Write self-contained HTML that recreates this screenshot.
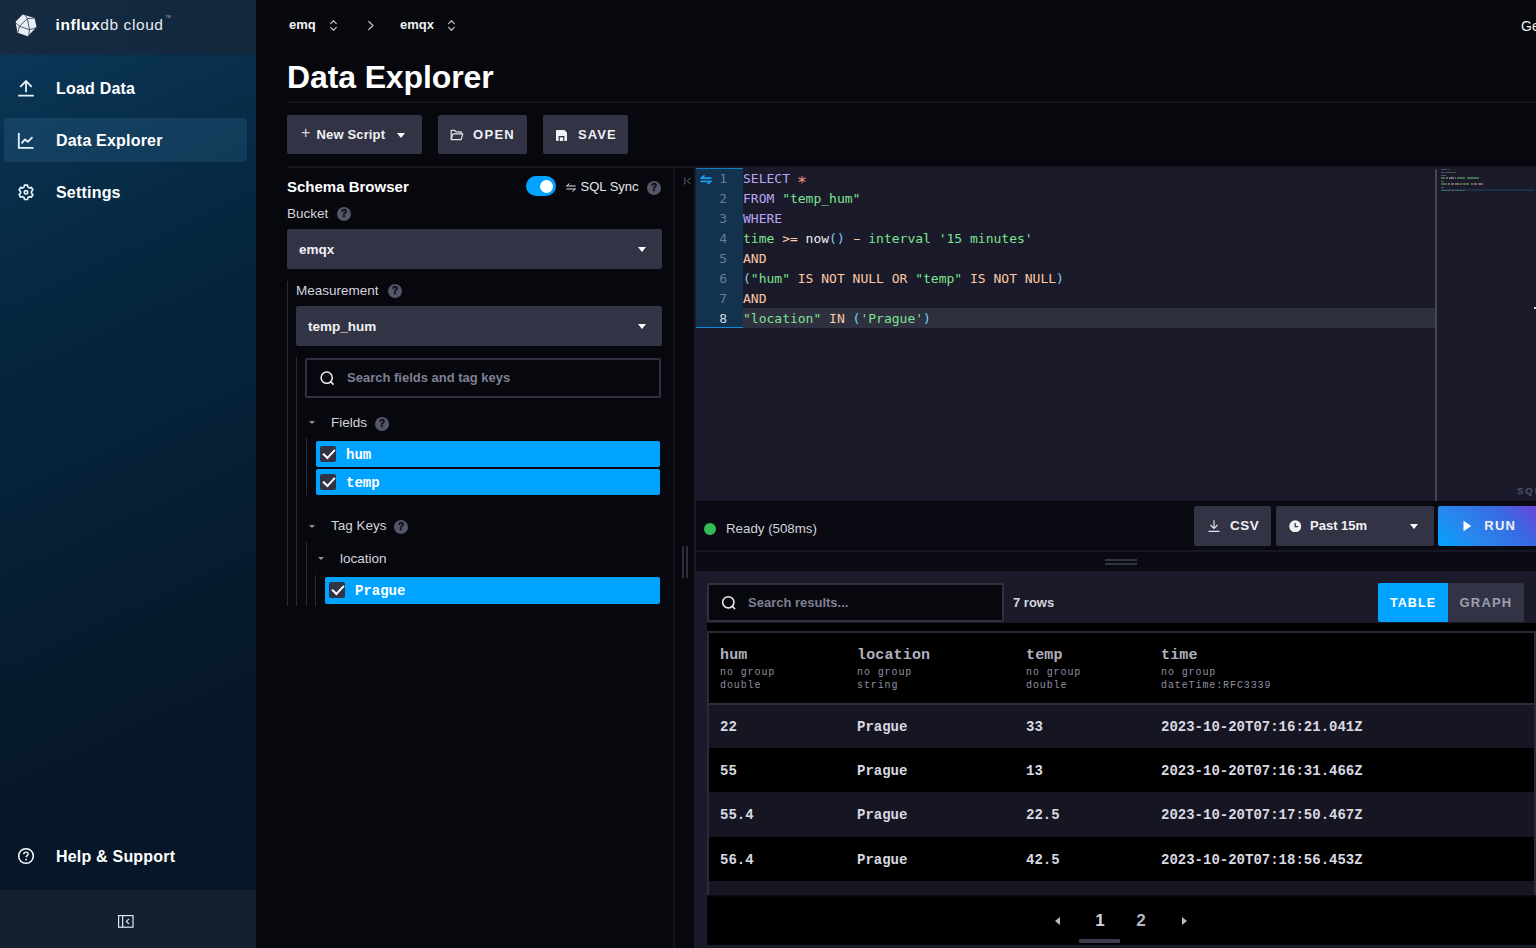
<!DOCTYPE html>
<html lang="en">
<head>
<meta charset="utf-8">
<title>Data Explorer | InfluxDB Cloud</title>
<style>
*{box-sizing:border-box;margin:0;padding:0}
html,body{width:1536px;height:948px;overflow:hidden;background:#07070e;color:#fff;font-family:"Liberation Sans",sans-serif;}
body{position:relative}
.abs{position:absolute}
svg{display:block}
/* sidebar */
#nav{position:absolute;left:0;top:0;width:255.500px;height:948px;background:linear-gradient(155deg,#0c3a5c 0%,#0b3656 6%,#082e4b 18%,#06273f 30%,#062238 47%,#061d31 58%,#07182a 75%,#071527 100%);overflow:hidden}
#nav .hdr{position:absolute;left:0;top:0;width:256px;height:54.500px;background:linear-gradient(90deg,#142b42,#12273c)}
#nav .ftr{position:absolute;left:0;top:890px;width:256px;height:58px;background:#13202f}
#nav .item{position:absolute;left:4px;width:243px;height:44px;border-radius:3px;font-weight:bold;font-size:16px;line-height:44px;color:#fff;letter-spacing:.2px}
#nav .item span{position:absolute;left:52px;top:1px;white-space:nowrap}
#nav .item svg{position:absolute;left:12px;top:12px}
#nav .item.act{background:rgba(80,150,200,.16)}
.logo-t{position:absolute;left:55.500px;top:12.800px;font-size:15.500px;line-height:20px;white-space:nowrap;letter-spacing:.58px}
/* main */
.bc{position:absolute;top:16px;font-size:13px;font-weight:bold;line-height:18px;color:#f1f1f3}
h1{position:absolute;left:287px;top:56.900px;font-size:32px;line-height:40px;font-weight:bold;letter-spacing:-.12px;white-space:nowrap}
.hline{position:absolute;height:2px;background:#15151f}
.btn{position:absolute;top:114.500px;height:39.500px;background:#333346;border-radius:2px;color:#f1f1f3;font-weight:bold;font-size:13px;line-height:39px;white-space:nowrap}
.lbl{position:absolute;font-size:13.500px;line-height:19.400px;color:#d5d5dd;white-space:nowrap}
.q{position:absolute;width:14px;height:14px;border-radius:50%;background:#55566a;color:#0d0d16;font-size:10px;font-weight:bold;line-height:14.500px;text-align:center;-webkit-text-stroke:.45px #0d0d16}
.dd{position:absolute;height:40px;background:#333346;border-radius:2px;font-size:13.500px;font-weight:bold;line-height:41.200px;color:#f1f1f3}
.dd:after{content:"";position:absolute;right:16px;top:18px;border:5px solid transparent;border-top:5px solid #fff;border-bottom:0;border-left-width:4.5px;border-right-width:4.5px}
.vl{position:absolute;width:1px;background:#292937}
.sel{position:absolute;height:26.400px;background:#00a3ff;border-radius:2px;font-family:"Liberation Mono",monospace;font-weight:bold;font-size:14px;line-height:26px;color:#fff}
.sel i{position:absolute;left:4px;top:5px;width:16px;height:16px;background:#333346;border-radius:2px}
.sel span{position:absolute;left:30px;top:1px}
.sel i:after{content:"";position:absolute;left:3px;top:3px;width:10px;height:5px;border-left:2.4px solid #fff;border-bottom:2.4px solid #fff;transform:rotate(-47deg);transform-origin:50% 50%}
.caret{position:absolute;border:3.500px solid transparent;border-top:3.800px solid #8e8fa1;border-bottom:0}
/* editor */
#ed{position:absolute;left:696px;top:168px;width:840px;height:333px;background:#1a1a2a;font-family:"DejaVu Sans Mono","Liberation Mono",monospace;font-size:13px;line-height:20px;overflow:hidden}
#ed .gut{position:absolute;left:0;top:.2px;width:47px;height:159.800px;background:#12324d;border-top:1.800px solid #107cc2;border-bottom:1.500px solid #0e8ad8}
#ed .ln{position:absolute;left:0;width:31px;text-align:right;color:#687d96;height:20px}
#ed .cl{position:absolute;left:47px;height:20px;white-space:pre;color:#f1f1f3}
.k{color:#b9a7f5}.s{color:#7ce490}.o{color:#ffc9a3}.p{color:#7ad3f5}.r{color:#ff9580}
/* table */
.mono{font-family:"Liberation Mono",monospace}
.row{position:absolute;left:709px;width:825px;height:43px;font-family:"Liberation Mono",monospace;font-weight:bold;font-size:14px;line-height:45px;color:#d9d9e1}
.row span{position:absolute;top:.8px;white-space:pre}
.th{position:absolute;top:646.700px;font-family:"Liberation Mono",monospace;color:#a4a4b4}
.th b{display:block;font-size:15px;line-height:17px;letter-spacing:.15px;color:#b0b0bd;margin-bottom:2px}
.th em{display:block;font-style:normal;font-size:10px;line-height:13.300px;letter-spacing:.9px;color:#8e8fa1}
</style>
</head>
<body>
<div id="nav">
  <div class="hdr"></div>
  <div class="ftr"></div>
  <svg class="abs" style="left:14px;top:13px" width="24" height="25" viewBox="14 13 24 25"><polygon points="22.600,14.600 34.600,18.100 36.500,27 27.800,36.300 17.500,32.700 15.600,21.700" fill="#e9edf6"/><path d="M25.300 15.400L27.400 18.600L19.400 26.250M27.400 18.600L29.500 29.700L28.700 35.400M27.400 18.600L34.400 18.200M16 22.800L19.400 26.250L29.500 29.700L36.200 27.700M19.400 26.250L17.900 32.600" stroke="#1b2d45" stroke-width=".75" fill="none"/></svg>
  <div class="logo-t"><b>influx</b><span style="color:#e6e9f0">db cloud</span><sup style="font-size:3.500px;letter-spacing:0;position:relative;top:-6px;left:2px;color:#aab4c2">TM</sup></div>
  <div class="item" style="top:66px"><svg width="20" height="20" viewBox="0 0 20 20" fill="none" stroke="#e7f2fb" stroke-width="1.800"><path d="M10 14.300V3.400M4.300 8.800L10 3.100l5.700 5.700M2.200 17.700h15.600"/></svg><span>Load Data</span></div>
  <div class="item act" style="top:118px"><svg width="20" height="20" viewBox="0 0 20 20" fill="none" stroke="#e7f2fb" stroke-width="1.800"><path d="M2.800 3.100V17.800H17.500"/><path d="M5.500 13.400L9 9.400l2.800 2.400L16.500 7.100" stroke-linejoin="round"/></svg><span>Data Explorer</span></div>
  <div class="item" style="top:170px"><svg width="20" height="20" viewBox="0 0 20 20" fill="none" stroke="#e7f2fb" stroke-width="1.800" stroke-linejoin="round"><g transform="translate(10 10.300) scale(.9) translate(-10 -10)"><path d="M8.300 2h3.400l.5 2.200 1.700 1 2.100-.7 1.700 2.900-1.600 1.500v2.200l1.600 1.500-1.700 2.900-2.100-.7-1.700 1-.5 2.200H8.300l-.5-2.200-1.700-1-2.100.7-1.700-2.900 1.600-1.500V8.900L2.300 7.400 4 4.500l2.100.7 1.700-1z"/><circle cx="10" cy="10" r="1.900"/></g></svg><span>Settings</span></div>
  <div class="item" style="top:834px"><svg width="20" height="20" viewBox="0 0 20 20" fill="none" stroke="#fff" stroke-width="1.500"><circle cx="10" cy="10" r="7.300"/><path d="M7.800 8.200c0-1.300 1-2.100 2.200-2.100s2.200.8 2.200 2c0 1.500-2.100 1.600-2.100 3.200" stroke-width="1.400"/><circle cx="10.100" cy="13.600" r=".9" fill="#fff" stroke="none"/></svg><span>Help &amp; Support</span></div>
  <svg class="abs" style="left:118px;top:915px" width="16" height="13" viewBox="0 0 16 13" fill="none" stroke="#e4e8ee" stroke-width="1.200"><rect x=".6" y=".6" width="14.400" height="11.600"/><path d="M4.600 .6v11.600M11 3.800L8.400 6.400 11 9"/></svg>
</div>
<div id="main">
  <!-- breadcrumbs -->
  <div class="bc" style="left:289px">emq</div>
  <svg class="abs" style="left:329px;top:19px" width="9" height="13" viewBox="0 0 9 13" fill="none" stroke="#b9b9c5" stroke-width="1.300" stroke-linecap="round" stroke-linejoin="round"><path d="M1.700 4.600L4.500 1.800l2.800 2.800M1.700 8.400l2.800 2.800 2.800-2.800"/></svg>
  <svg class="abs" style="left:367px;top:20px" width="8" height="11" viewBox="0 0 8 11" fill="none" stroke="#b9b9c5" stroke-width="1.300" stroke-linecap="round" stroke-linejoin="round"><path d="M1.800 1.500L6 5.500l-4.200 4"/></svg>
  <div class="bc" style="left:400px">emqx</div>
  <svg class="abs" style="left:447px;top:19px" width="9" height="13" viewBox="0 0 9 13" fill="none" stroke="#b9b9c5" stroke-width="1.300" stroke-linecap="round" stroke-linejoin="round"><path d="M1.700 4.600L4.500 1.800l2.800 2.800M1.700 8.400l2.800 2.800 2.800-2.800"/></svg>
  <div class="abs" style="left:1521px;top:17px;font-size:14px;line-height:18px;color:#f1f1f3;white-space:nowrap">Get Started</div>
  <h1>Data Explorer</h1>
  <div class="hline" style="left:287px;top:101px;width:1249px"></div>
  <!-- buttons -->
  <div class="btn" style="left:287px;width:135px"><span class="abs" style="left:14px;top:-1.500px;font-weight:normal;font-size:16px;color:#d5d5dd">+</span><span class="abs" style="left:29.500px;letter-spacing:.15px">New Script</span><i class="abs" style="left:110px;top:18px;border:5px solid transparent;border-top:5px solid #fff;border-bottom:0;border-left-width:4.500px;border-right-width:4.500px"></i></div>
  <div class="btn" style="left:438px;width:89px"><svg class="abs" style="left:12px;top:14px" width="14" height="12" viewBox="0 0 14 12" fill="none" stroke="#e4e4ea" stroke-width="1.200" stroke-linejoin="round"><path d="M1.200 10.600V1.400h3.600l1.200 1.500h5.200v2"/><path d="M1.200 10.600l1.700-5.700h9.900l-1.700 5.700z"/></svg><span class="abs" style="left:35px;letter-spacing:1.300px">OPEN</span></div>
  <div class="btn" style="left:543px;width:85px"><svg class="abs" style="left:13px;top:15px" width="11" height="11" viewBox="0 0 11 11"><path d="M0 1a1 1 0 0 1 1-1h7.500L11 2.500V10a1 1 0 0 1-1 1H1a1 1 0 0 1-1-1z" fill="#f1f1f3"/><rect x="2.600" y="6" width="5.800" height="5" fill="#333346"/><rect x="3.800" y="7.300" width="3.400" height="3.700" fill="#f1f1f3"/></svg><span class="abs" style="left:35px;letter-spacing:1.050px">SAVE</span></div>
  <div class="hline" style="left:287px;top:166px;width:1249px"></div>
  <!-- schema browser -->
  <div class="abs" style="left:287px;top:176.500px;font-size:15px;font-weight:bold;line-height:20px;white-space:nowrap">Schema Browser</div>
  <div class="abs" style="left:526px;top:176px;width:30px;height:20px;border-radius:10px;background:#00a3ff"><i class="abs" style="left:14px;top:3.500px;width:13px;height:13px;border-radius:50%;background:#fff"></i></div>
  <svg class="abs" style="left:566px;top:182.500px" width="10" height="9" viewBox="0 0 11 10" fill="none" stroke="#e4e4ea" stroke-width="1.100" stroke-linecap="round" stroke-linejoin="round"><path d="M.8 3.300h9.400M.8 3.300L3.600.7M10.200 6.700H.8M10.200 6.700L7.400 9.300"/></svg>
  <div class="abs" style="left:580.500px;top:176.500px;font-size:13px;line-height:20px;color:#e7e8eb;white-space:nowrap">SQL Sync</div>
  <div class="q" style="left:647px;top:180.500px">?</div>
  <div class="lbl" style="left:287px;top:204px">Bucket</div>
  <div class="q" style="left:337px;top:207px">?</div>
  <div class="dd" style="left:287px;top:229px;width:374.500px"><span class="abs" style="left:12px">emqx</span></div>
  <div class="vl" style="left:287px;top:281px;height:325px"></div>
  <div class="lbl" style="left:296px;top:280.500px">Measurement</div>
  <div class="q" style="left:388px;top:284px">?</div>
  <div class="dd" style="left:296px;top:306px;width:365.500px"><span class="abs" style="left:12px">temp_hum</span></div>
  <div class="vl" style="left:296px;top:357px;height:249px"></div>
  <div class="abs" style="left:305px;top:358px;width:356px;height:40px;border:2px solid #303040;border-radius:2px;background:#07070e"></div>
  <svg class="abs" style="left:319px;top:369.500px" width="16" height="16" viewBox="0 0 16 16" fill="none" stroke="#f1f1f3" stroke-width="1.500" stroke-linecap="round"><circle cx="7.700" cy="7.700" r="5.600"/><path d="M11.800 11.800l2.300 2.300"/></svg>
  <div class="abs" style="left:347px;top:368px;font-size:13px;font-weight:bold;line-height:20px;color:#7f8094;white-space:nowrap">Search fields and tag keys</div>
  <i class="caret" style="left:308.500px;top:421px"></i>
  <div class="lbl" style="left:331px;top:413px">Fields</div>
  <div class="q" style="left:375px;top:416.500px">?</div>
  <div class="vl" style="left:306px;top:438px;height:57px"></div>
  <div class="sel" style="left:316px;top:441px;width:343.500px"><i></i><span>hum</span></div>
  <div class="sel" style="left:316px;top:469px;width:343.500px"><i></i><span>temp</span></div>
  <i class="caret" style="left:308.500px;top:524.500px"></i>
  <div class="lbl" style="left:331px;top:516.400px">Tag Keys</div>
  <div class="q" style="left:394px;top:520px">?</div>
  <div class="vl" style="left:306px;top:542px;height:64px"></div>
  <i class="caret" style="left:317.500px;top:557px"></i>
  <div class="lbl" style="left:340px;top:549px">location</div>
  <div class="vl" style="left:315px;top:575px;height:31px"></div>
  <div class="sel" style="left:325px;top:577.400px;width:334.500px"><i></i><span>Prague</span></div>
  <!-- resizer -->
  <div class="abs" style="left:673px;top:168px;width:2px;height:780px;background:#14141e"></div>
  <div class="abs" style="left:682px;top:545.500px;width:1.600px;height:32px;background:#2e2e3d"></div>
  <div class="abs" style="left:686px;top:545.500px;width:1.600px;height:32px;background:#2e2e3d"></div>
  <svg class="abs" style="left:683.500px;top:176.500px" width="8" height="8" viewBox="0 0 9 9" fill="none" stroke="#68687b" stroke-width="1.100"><path d="M1 .5v8M7.500 1L3.500 4.500l4 3.500"/></svg>
<div class="abs" style="left:694.200px;top:166.500px;width:2px;height:782px;background:#1a1a2a"></div>
<div class="abs" style="left:696px;top:166.500px;width:840px;height:2px;background:#1a1a2a"></div>
<div class="abs" style="left:696px;top:501.500px;width:840px;height:70px;background:#0a0a13"></div>
<div id="ed">
  <div class="abs" style="left:47px;top:140px;width:692px;height:20px;background:#2e2f3f"></div>
  <div class="gut"></div>
  <svg class="abs" style="left:3.800px;top:6.500px" width="12" height="9.500" viewBox="0 0 14 11" fill="none" stroke="#1e9bf0" stroke-width="1.900" stroke-linecap="round" stroke-linejoin="round"><path d="M1.200 3.600h11.600M1.200 3.600L4.600.9M12.800 7.400H1.200M12.800 7.400L9.400 10.100"/></svg>
  <div class="ln" style="top:0.5px">1</div><div class="cl" style="top:0.5px"><span class="k">SELECT</span> <span class="r" style="display:inline-block;transform:scale(1.25) translateY(2.900px)">*</span></div>
  <div class="ln" style="top:20.5px">2</div><div class="cl" style="top:20.5px"><span class="k">FROM</span> <span class="s">"temp_hum"</span></div>
  <div class="ln" style="top:40.5px">3</div><div class="cl" style="top:40.5px"><span class="k">WHERE</span></div>
  <div class="ln" style="top:60.5px">4</div><div class="cl" style="top:60.5px"><span class="s">time</span> <span class="o">&gt;=</span> now<span class="p">()</span> <span class="o" style="display:inline-block;transform:scaleX(1.700)">-</span> <span class="s">interval</span> <span class="s">'15 minutes'</span></div>
  <div class="ln" style="top:80.5px">5</div><div class="cl" style="top:80.5px"><span class="o">AND</span></div>
  <div class="ln" style="top:100.5px">6</div><div class="cl" style="top:100.5px"><span class="p">(</span><span class="s">"hum"</span> <span class="o">IS NOT NULL OR</span> <span class="s">"temp"</span> <span class="o">IS NOT NULL</span><span class="p">)</span></div>
  <div class="ln" style="top:120.5px">7</div><div class="cl" style="top:120.5px"><span class="o">AND</span></div>
  <div class="ln" style="top:140.5px;color:#d5d5dd">8</div><div class="cl" style="top:140.5px"><span class="s">"location"</span> <span class="o">IN</span> <span class="p">(</span><span class="s">'Prague'</span><span class="p">)</span></div>
  <div class="abs" style="left:738.600px;top:1px;width:2.400px;height:334px;background:#454558;border-radius:1px 1px 0 0"></div>
  <div class="abs" style="left:745px;top:21px;width:93px;height:2.200px;background:#1b3049"></div>
  <i class="abs" style="left:745.0px;top:0.6px;width:6.1px;height:1.500px;background:#8f82c8;opacity:.45"></i>
  <i class="abs" style="left:752.1px;top:0.6px;width:1.0px;height:1.500px;background:#c87a66;opacity:.45"></i>
  <i class="abs" style="left:745.0px;top:3.6px;width:4.1px;height:1.500px;background:#8f82c8;opacity:.45"></i>
  <i class="abs" style="left:750.1px;top:3.6px;width:10.2px;height:1.500px;background:#62b070;opacity:.45"></i>
  <i class="abs" style="left:745.0px;top:6.6px;width:5.1px;height:1.500px;background:#8f82c8;opacity:.45"></i>
  <i class="abs" style="left:745.0px;top:9.1px;width:4.1px;height:2.400px;background:#62b070;opacity:.55"></i>
  <i class="abs" style="left:750.1px;top:9.1px;width:2.0px;height:2.400px;background:#c8a488;opacity:.55"></i>
  <i class="abs" style="left:753.2px;top:9.1px;width:5.1px;height:2.400px;background:#b8b8c4;opacity:.55"></i>
  <i class="abs" style="left:759.3px;top:9.1px;width:1.0px;height:2.400px;background:#c8a488;opacity:.55"></i>
  <i class="abs" style="left:761.3px;top:9.1px;width:8.2px;height:2.400px;background:#62b070;opacity:.55"></i>
  <i class="abs" style="left:770.5px;top:9.1px;width:12.2px;height:2.400px;background:#62b070;opacity:.55"></i>
  <i class="abs" style="left:745.0px;top:12.6px;width:3.1px;height:1.500px;background:#c8a488;opacity:.45"></i>
  <i class="abs" style="left:745.0px;top:15.1px;width:6.1px;height:2.400px;background:#62b070;opacity:.55"></i>
  <i class="abs" style="left:752.1px;top:15.1px;width:2.0px;height:2.400px;background:#c8a488;opacity:.55"></i>
  <i class="abs" style="left:755.2px;top:15.1px;width:3.1px;height:2.400px;background:#c8a488;opacity:.55"></i>
  <i class="abs" style="left:759.3px;top:15.1px;width:4.1px;height:2.400px;background:#c8a488;opacity:.55"></i>
  <i class="abs" style="left:764.4px;top:15.1px;width:2.0px;height:2.400px;background:#c8a488;opacity:.55"></i>
  <i class="abs" style="left:767.4px;top:15.1px;width:6.1px;height:2.400px;background:#62b070;opacity:.55"></i>
  <i class="abs" style="left:774.6px;top:15.1px;width:2.0px;height:2.400px;background:#c8a488;opacity:.55"></i>
  <i class="abs" style="left:777.6px;top:15.1px;width:3.1px;height:2.400px;background:#c8a488;opacity:.55"></i>
  <i class="abs" style="left:781.7px;top:15.1px;width:5.1px;height:2.400px;background:#c8a488;opacity:.55"></i>
  <i class="abs" style="left:745.0px;top:18.6px;width:3.1px;height:1.500px;background:#c8a488;opacity:.45"></i>
  <i class="abs" style="left:745.0px;top:21.6px;width:10.2px;height:1.500px;background:#62b070;opacity:.45"></i>
  <i class="abs" style="left:756.2px;top:21.6px;width:2.0px;height:1.500px;background:#c8a488;opacity:.45"></i>
  <i class="abs" style="left:759.3px;top:21.6px;width:10.2px;height:1.500px;background:#62b070;opacity:.45"></i>
  <div class="abs" style="left:821px;top:315.600px;font-family:'Liberation Sans',sans-serif;font-weight:bold;font-size:9.500px;line-height:14px;letter-spacing:2px;color:#525367;white-space:nowrap">SQL</div>
</div>
<div class="abs" style="left:1533.500px;top:307px;width:2.500px;height:2px;background:#dcdce8"></div>
<div class="abs" style="left:704px;top:522.500px;width:12px;height:12px;border-radius:50%;background:#34bb55"></div>
<div class="abs" style="left:726px;top:519px;font-size:13.300px;line-height:20px;color:#d2d3da;white-space:nowrap">Ready (508ms)</div>
<div class="btn" style="left:1194px;top:506.200px;width:77px;font-size:14px"><svg class="abs" style="left:14px;top:14px" width="12" height="12" viewBox="0 0 12 12" fill="none" stroke="#e4e4ea" stroke-width="1.200"><path d="M6 .3v8M2.500 5l3.500 3.400L9.500 5M.5 11.300h11"/></svg><span class="abs" style="left:36px;letter-spacing:.5px;font-size:13.500px">CSV</span></div>
<div class="btn" style="left:1276px;top:506.200px;width:158px;font-size:14px"><svg class="abs" style="left:12.500px;top:13.500px" width="12.500" height="12.500" viewBox="0 0 13 13"><circle cx="6.500" cy="6.500" r="6.200" fill="#f1f1f3"/><path d="M6.400 3v3.900h3" stroke="#333346" stroke-width="1.300" fill="none"/></svg><span class="abs" style="left:34px;font-size:13px">Past 15m</span><i class="abs" style="left:133.500px;top:17.500px;border:5px solid transparent;border-top:5px solid #fff;border-bottom:0;border-left-width:4.500px;border-right-width:4.500px"></i></div>
<div class="btn" style="left:1438.300px;top:506.200px;width:110px;font-size:14px;background:linear-gradient(45deg,#00a3ff 0%,#2689ee 27%,#3a69e1 65%,#6a45d8 92%,#7540d6 100%)"><svg class="abs" style="left:25px;top:14px" width="9" height="12" viewBox="0 0 9 12"><path d="M.5.800L8.300 6 .5 11.200z" fill="#fff"/></svg><span class="abs" style="left:46px;letter-spacing:1.200px;font-size:13px">RUN</span></div>
<div class="abs" style="left:696px;top:549.500px;width:840px;height:2px;background:#171723"></div>
<div class="abs" style="left:1105px;top:559.300px;width:32px;height:2px;background:#333346"></div>
<div class="abs" style="left:1105px;top:563.300px;width:32px;height:2px;background:#333346"></div>
<div id="res" class="abs" style="left:696px;top:571px;width:840px;height:377px;background:#1a1a2a"></div>
<div class="abs" style="left:707px;top:583px;width:297px;height:39px;border:2px solid #303040;border-radius:2px;background:#07070e"></div>
<svg class="abs" style="left:721px;top:595px" width="16" height="16" viewBox="0 0 16 16" fill="none" stroke="#f1f1f3" stroke-width="1.500" stroke-linecap="round"><circle cx="7.300" cy="7.300" r="5.600"/><path d="M11.400 11.400l2.300 2.300"/></svg>
<div class="abs" style="left:748px;top:593px;font-size:13px;font-weight:bold;line-height:20px;color:#7f8094;white-space:nowrap">Search results...</div>
<div class="abs" style="left:1013px;top:593px;font-size:13px;font-weight:bold;line-height:20px;color:#d5d5dd;white-space:nowrap">7 rows</div>
<div class="abs" style="left:1378px;top:583px;width:70px;height:39px;background:#00a3ff;border-radius:2px 0 0 2px;font-size:12.500px;font-weight:bold;line-height:40.500px;letter-spacing:1.100px;text-align:center;color:#fff">TABLE</div>
<div class="abs" style="left:1448px;top:583px;width:76px;height:39px;background:#333346;border-radius:0 2px 2px 0;font-size:13px;font-weight:bold;line-height:39px;letter-spacing:1.200px;text-align:center;color:#9e9eae">GRAPH</div>
<div class="abs" style="left:707px;top:622.600px;width:829px;height:9px;background:#000"></div>
<div class="abs" style="left:707px;top:630.500px;width:829px;height:264px;background:#000;border:2px solid #2a2a3a;border-right-width:2px;border-bottom:0"></div>
<div class="abs" style="left:709px;top:702.800px;width:825px;height:2.200px;background:#2c2c3c"></div>
<div class="th" style="left:720px"><b>hum</b><em>no group</em><em>double</em></div>
<div class="th" style="left:857px"><b>location</b><em>no group</em><em>string</em></div>
<div class="th" style="left:1026px"><b>temp</b><em>no group</em><em>double</em></div>
<div class="th" style="left:1161px"><b>time</b><em>no group</em><em>dateTime:RFC3339</em></div>
<div class="row" style="top:704.5px;height:43.9px;background:#161623"><span style="left:11px">22</span><span style="left:148px">Prague</span><span style="left:317px">33</span><span style="left:452px">2023-10-20T07:16:21.041Z</span></div>
<div class="row" style="top:748.4px;height:43.9px;background:#000"><span style="left:11px">55</span><span style="left:148px">Prague</span><span style="left:317px">13</span><span style="left:452px">2023-10-20T07:16:31.466Z</span></div>
<div class="row" style="top:792.3px;height:44.5px;background:#161623"><span style="left:11px">55.4</span><span style="left:148px">Prague</span><span style="left:317px">22.5</span><span style="left:452px">2023-10-20T07:17:50.467Z</span></div>
<div class="row" style="top:836.8px;height:43.9px;background:#000"><span style="left:11px">56.4</span><span style="left:148px">Prague</span><span style="left:317px">42.5</span><span style="left:452px">2023-10-20T07:18:56.453Z</span></div>
<div class="row" style="top:880.700px;height:14.300px;background:#161623"></div>
<div class="abs" style="left:707px;top:895px;width:829px;height:49.500px;background:linear-gradient(180deg,#0c0c14 0,#000 3px)"></div>
<i class="abs" style="left:1055px;top:916.500px;border:4.500px solid transparent;border-right:5px solid #b9b9c5;border-left:0"></i>
<div class="abs" style="left:1080px;top:909px;width:40px;text-align:center;font-size:17px;font-weight:bold;line-height:24px;color:#d5d5dd">1</div>
<div class="abs" style="left:1121px;top:909px;width:40px;text-align:center;font-size:17px;font-weight:bold;line-height:24px;color:#b9b9c5">2</div>
<i class="abs" style="left:1182px;top:916.500px;border:4.500px solid transparent;border-left:5px solid #b9b9c5;border-right:0"></i>
<div class="abs" style="left:1079px;top:938.500px;width:41px;height:4px;background:#3c3c4e;border-radius:1px"></div>
</div>
</body>
</html>
